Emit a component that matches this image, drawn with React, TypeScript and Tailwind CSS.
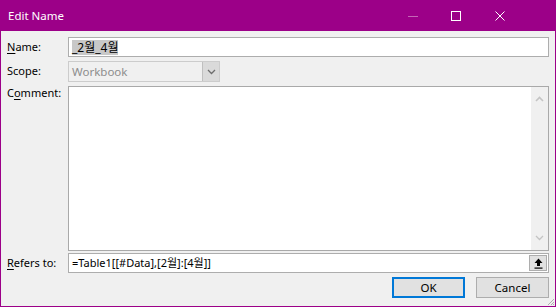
const FONT = "font-['Segoe_UI','Noto_Sans','Noto_Sans_CJK_KR',sans-serif]";

function ChevronUp() {
  return (
    <svg width="9" height="6" viewBox="0 0 9 6">
      <path d="M1 5 L4.5 1.5 L8 5" fill="none" stroke="#c4c4c4" strokeWidth="1.6" />
    </svg>
  );
}

function ChevronDown({ color = '#c4c4c4' }: { color?: string }) {
  return (
    <svg width="9" height="6" viewBox="0 0 9 6">
      <path d="M1 1 L4.5 4.5 L8 1" fill="none" stroke={color} strokeWidth="1.3" />
    </svg>
  );
}

export default function App() {
  const labelCls = 'w-[67px] shrink-0 pl-[6px] text-[11px] text-black whitespace-nowrap';
  const btn =
    'flex h-[21px] w-[73px] items-center justify-center bg-[#e1e1e1] text-[11.5px] text-black';

  return (
    <div
      className={
        FONT +
        ' flex h-[307px] w-[556px] flex-col border border-[#9c0088] bg-[#f0f0f0] text-black'
      }
    >
      {/* title bar */}
      <div className="flex h-[30px] shrink-0 items-center bg-[#9c0088] pr-[33px] text-white">
        <div className="flex-1 pl-[7px] text-[11.5px]">Edit Name</div>
        <div className="flex h-full w-[42px] items-center justify-center">
          <div className="h-px w-[10px] bg-[#c466b6]" />
        </div>
        <div className="flex h-full w-[44px] items-center justify-center">
          <div className="h-[10px] w-[10px] border border-white" />
        </div>
        <div className="flex h-full w-[44px] items-center justify-center">
          <svg width="10" height="10" viewBox="0 0 10 10">
            <path d="M0.5 0.5 L9.5 9.5 M9.5 0.5 L0.5 9.5" stroke="white" strokeWidth="1" />
          </svg>
        </div>
      </div>

      {/* body */}
      <div className="flex flex-1 flex-col pr-[6px] pt-[6px]">
        {/* Name */}
        <div className="flex h-[20px] items-center">
          <div className={labelCls}>
            <span className="underline underline-offset-2">N</span>ame:
          </div>
          <div className="flex h-full flex-1 items-center border border-[#adadad] bg-white pl-[3px]">
            <span className="bg-[#c8c8c8] text-[12px] leading-[15px] text-black">_2월_4월</span>
          </div>
        </div>

        {/* Scope */}
        <div className="mt-[4px] flex h-[21px] items-center">
          <div className={labelCls + ' text-[#8d8d8d]'}>Scope:</div>
          <div className="flex h-full w-[152px] items-stretch border border-[#cccccc] bg-[#f0f0f0]">
            <div className="flex flex-1 items-center pl-[3px] text-[11.5px] text-[#8d8d8d]">
              Workbook
            </div>
            <div className="flex w-[17px] items-center justify-center border-l border-[#bfbfbf] bg-[#dadada]">
              <ChevronDown color="#6d6d6d" />
            </div>
          </div>
        </div>

        {/* Comment */}
        <div className="mt-[4px] flex h-[165px]">
          <div className={labelCls + ' leading-[14px]'}>
            C<span className="underline underline-offset-2">o</span>mment:
          </div>
          <div className="flex h-full flex-1 border border-[#a9a9a9] bg-white">
            <div className="flex-1" />
            <div className="flex w-[17px] flex-col items-center justify-between bg-[#f0f0f0] py-[9px]">
              <ChevronUp />
              <ChevronDown />
            </div>
          </div>
        </div>

        {/* Refers to */}
        <div className="mt-[2px] flex h-[20px] items-center">
          <div className={labelCls}>
            <span className="underline underline-offset-2">R</span>efers to:
          </div>
          <div className="flex h-full flex-1 items-stretch border border-[#adadad] bg-white">
            <div className="flex flex-1 items-center pl-[3px] text-[11px]">
              =Table1[[#Data],[2월]:[4월]]
            </div>
            <div className="m-[1px] flex w-[18px] items-center justify-center border border-[#adadad] bg-[#e1e1e1]">
              <svg width="9" height="11" viewBox="0 0 9 11">
                <path d="M4.5 0.5 L8.5 5 L6 5 L6 8 L3 8 L3 5 L0.5 5 Z" fill="black" />
                <rect x="0.5" y="9.5" width="8" height="1.2" fill="black" />
              </svg>
            </div>
          </div>
        </div>

        {/* buttons */}
        <div className="mt-[4px] flex justify-end gap-[11px]">
          <div className={btn + ' border-2 border-[#0078d7]'}>OK</div>
          <div className={btn + ' border border-[#adadad]'}>Cancel</div>
        </div>

        {/* grip */}
        <div className="mt-auto flex justify-end">
          <svg width="8" height="8" viewBox="0 0 8 8" className="-mr-[6px]">
            <path d="M7 1 L1 7 M7 4 L4 7 M7 6 L6 7" stroke="#b0b0b0" strokeWidth="1" />
          </svg>
        </div>
      </div>
    </div>
  );
}
